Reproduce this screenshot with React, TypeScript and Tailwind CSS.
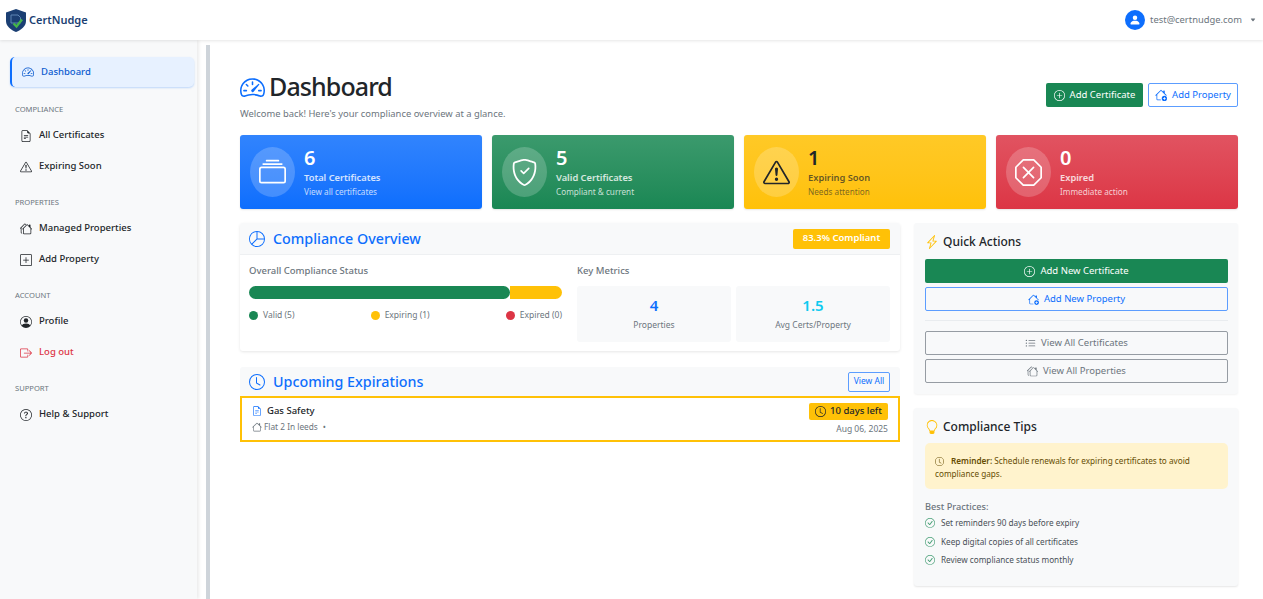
import type { ReactNode } from 'react';
import {
  BsBoxArrowRight,
  BsCaretDownFill,
  BsCheckCircle,
  BsClock,
  BsCollection,
  BsExclamationTriangle,
  BsFileEarmarkText,
  BsHouse,
  BsHouseAdd,
  BsHouses,
  BsLightbulb,
  BsLightningCharge,
  BsListUl,
  BsPersonCircle,
  BsPersonFill,
  BsPieChart,
  BsPlusCircle,
  BsPlusSquare,
  BsQuestionCircle,
  BsShieldCheck,
  BsSpeedometer2,
  BsXOctagon,
} from 'react-icons/bs';

function Logo() {
  return (
    <svg width="20" height="23" viewBox="0 0 20 23">
      <path d="M10 0 L20 3.5 V12 C20 17.5 15 21 10 23 C5 21 0 17.5 0 12 V3.5 Z" fill="#1b3f73" />
      <path d="M5 6 H12 L14.5 8.5 V14 H5 Z" fill="none" stroke="#5f86b5" strokeWidth="1" />
      <path d="M7.5 14.5 L10.5 17.5 L16 10.5" fill="none" stroke="#45b649" strokeWidth="2.4" />
    </svg>
  );
}

function SideLabel({ children, className }: { children: ReactNode; className: string }) {
  return <div className={`pl-[15px] text-[7.6px] uppercase leading-[12px] text-[#6c757d] ${className}`}>{children}</div>;
}

function SideLink({ icon, label, className = 'text-[#212529]' }: { icon: ReactNode; label: string; className?: string }) {
  return (
    <div className={`flex h-[31px] items-center gap-[7px] pl-[20px] text-[9.5px] font-medium ${className}`}>
      <span className="flex w-[12px] justify-center text-[12px]">{icon}</span>
      {label}
    </div>
  );
}

function Sidebar() {
  return (
    <aside className="w-[197px] shrink-0 bg-[#f8f9fa] pl-[10px] pt-[17px] shadow-[2px_0_3px_rgba(0,0,0,0.08)]">
      <div className="flex h-[30px] w-[184px] items-center gap-[7px] rounded-[5px] border-l-[2px] border-[#0d6efd] bg-[#e7f1ff] pl-[10px] text-[9.5px] font-medium text-[#0d5ccf] shadow-[0_1px_2px_rgba(13,110,253,0.25)]">
        <BsSpeedometer2 className="text-[12px]" />
        Dashboard
      </div>
      <div className="-ml-[10px]">
        <SideLabel className="mt-[16px]">Compliance</SideLabel>
        <div className="mt-[5px]">
          <SideLink icon={<BsFileEarmarkText />} label="All Certificates" />
          <SideLink icon={<BsExclamationTriangle />} label="Expiring Soon" />
        </div>
        <SideLabel className="mt-[14px]">Properties</SideLabel>
        <div className="mt-[5px]">
          <SideLink icon={<BsHouses />} label="Managed Properties" />
          <SideLink icon={<BsPlusSquare />} label="Add Property" />
        </div>
        <SideLabel className="mt-[14px]">Account</SideLabel>
        <div className="mt-[5px]">
          <SideLink icon={<BsPersonCircle />} label="Profile" />
          <SideLink icon={<BsBoxArrowRight />} label="Log out" className="text-[#dc3545]" />
        </div>
        <SideLabel className="mt-[14px]">Support</SideLabel>
        <div className="mt-[5px]">
          <SideLink icon={<BsQuestionCircle />} label="Help & Support" />
        </div>
      </div>
    </aside>
  );
}

function StatCard(props: {
  icon: ReactNode;
  value: string;
  title: string;
  sub: string;
  className: string;
  circle: string;
  titleColor: string;
  subColor: string;
}) {
  return (
    <div className={`flex h-[74px] items-center gap-[9px] rounded-[3px] pl-[10px] shadow-[0_1px_2px_rgba(0,0,0,0.1)] ${props.className}`}>
      <div className={`flex h-[50px] w-[45px] items-center justify-center rounded-[50%] text-[27px] ${props.circle}`}>{props.icon}</div>
      <div>
        <div className="text-[20px] font-semibold leading-[24px]">{props.value}</div>
        <div className={`mt-[1px] text-[9.3px] font-semibold leading-[14px] ${props.titleColor}`}>{props.title}</div>
        <div className={`text-[8.2px] leading-[13px] ${props.subColor}`}>{props.sub}</div>
      </div>
    </div>
  );
}

function Legend({ color, label }: { color: string; label: string }) {
  return (
    <div className="flex items-center gap-[5px] text-[8.5px] text-[#6c757d]">
      <span className={`h-[9px] w-[9px] rounded-full ${color}`} />
      {label}
    </div>
  );
}

function Metric({ value, label, color }: { value: string; label: string; color: string }) {
  return (
    <div className="flex h-[56px] flex-col items-center justify-center rounded-[3px] bg-[#f8f9fa] pb-[3px]">
      <div className={`text-[15px] font-semibold leading-[20px] ${color}`}>{value}</div>
      <div className="mt-[4px] text-[8.5px] leading-[12px] text-[#6c757d]">{label}</div>
    </div>
  );
}

function WideButton({ icon, label, className }: { icon: ReactNode; label: string; className: string }) {
  return (
    <div className={`flex items-center justify-center gap-[5px] rounded-[2px] text-[9.5px] ${className}`}>
      <span className="text-[11px]">{icon}</span>
      {label}
    </div>
  );
}

function Tip({ children }: { children: string }) {
  return (
    <div className="flex h-[18.5px] items-center gap-[6px] text-[8.2px] text-[#495057]">
      <BsCheckCircle className="text-[10px] text-[#198754]/80" />
      {children}
    </div>
  );
}

export default function App() {
  return (
    <div className="flex h-[599px] flex-col overflow-hidden bg-white font-['Noto_Sans',sans-serif]">
      <header className="z-10 flex h-[40px] shrink-0 items-center justify-between bg-white pl-[6px] pr-[7px] shadow-[0_1px_3px_rgba(0,0,0,0.1)]">
        <div className="flex items-center gap-[3px] text-[11px] font-semibold text-[#1b3f73]">
          <Logo />
          CertNudge
        </div>
        <div className="flex items-center gap-[5px] text-[9.4px] text-[#6c757d]">
          <span className="flex h-[20px] w-[20px] items-center justify-center rounded-full bg-[#0d6efd] text-[12px] text-white">
            <BsPersonFill />
          </span>
          test@certnudge.com
          <BsCaretDownFill className="ml-[3px] text-[6px]" />
        </div>
      </header>

      <div className="flex flex-1">
        <Sidebar />
        <div className="ml-[9px] mt-[5px] w-[4px] shrink-0 bg-[#ced4da]" />
        <main className="ml-[30px] w-[998px] pt-[31px]">
          <div className="flex justify-between">
            <div>
              <h1 className="flex h-[32px] items-center gap-[4px] text-[25px] font-medium tracking-[-0.9px] text-[#212529]">
                <BsSpeedometer2 className="text-[25px] text-[#0d6efd]" />
                Dashboard
              </h1>
              <p className="mt-[4px] text-[9.4px] leading-[14px] text-[#6c757d]">Welcome back! Here's your compliance overview at a glance.</p>
            </div>
            <div className="mt-[12px] flex h-[24px] gap-[5px] text-[9.5px]">
              <div className="flex w-[97px] items-center justify-center gap-[5px] rounded-[2px] bg-[#198754] text-white">
                <BsPlusCircle className="text-[11px]" />
                Add Certificate
              </div>
              <div className="flex w-[90px] items-center justify-center gap-[5px] rounded-[2px] border border-[#5c9dff] text-[#0d6efd]">
                <BsHouseAdd className="text-[12px]" />
                Add Property
              </div>
            </div>
          </div>

          <div className="mt-[14px] grid grid-cols-4 gap-[10px]">
            <StatCard
              icon={<BsCollection />}
              value="6"
              title="Total Certificates"
              sub="View all certificates"
              className="bg-gradient-to-b from-[#3184fd] to-[#0d6efd] text-white"
              circle="bg-white/20"
              titleColor="text-white/80"
              subColor="text-white/75"
            />
            <StatCard
              icon={<BsShieldCheck />}
              value="5"
              title="Valid Certificates"
              sub="Compliant & current"
              className="bg-gradient-to-b from-[#3b9a6d] to-[#198754] text-white"
              circle="bg-white/20"
              titleColor="text-white/80"
              subColor="text-white/75"
            />
            <StatCard
              icon={<BsExclamationTriangle />}
              value="1"
              title="Expiring Soon"
              sub="Needs attention"
              className="bg-gradient-to-b from-[#ffc926] to-[#ffc107] text-[#212529]"
              circle="bg-white/20"
              titleColor="text-[#212529]/70"
              subColor="text-[#212529]/60"
            />
            <StatCard
              icon={<BsXOctagon />}
              value="0"
              title="Expired"
              sub="Immediate action"
              className="bg-gradient-to-b from-[#e15361] to-[#dc3545] text-white"
              circle="bg-white/20"
              titleColor="text-white/80"
              subColor="text-white/75"
            />
          </div>

          <div className="mt-[14px] flex justify-between">
            <div className="w-[660px]">
              <section className="h-[128px] rounded-[3px] bg-white shadow-[0_1px_3px_rgba(0,0,0,0.1)]">
                <div className="flex h-[32px] items-center justify-between rounded-t-[3px] border-b border-[#eef0f2] bg-[#f8f9fa] pl-[9px] pr-[10px]">
                  <h2 className="flex items-center gap-[8px] pt-[1px] text-[14.3px] font-medium text-[#0d6efd]">
                    <BsPieChart className="text-[16px]" />
                    Compliance Overview
                  </h2>
                  <span className="flex h-[20px] w-[97px] items-center justify-center rounded-[2px] bg-[#ffc107] text-[9.5px] font-semibold text-white">83.3% Compliant</span>
                </div>
                <div className="flex gap-[15px] pl-[9px] pr-[10px] pt-[9px]">
                  <div className="w-[313px]">
                    <div className="text-[9.5px] font-medium leading-[14px] text-[#6c757d]">Overall Compliance Status</div>
                    <div className="mt-[8px] flex h-[13px] overflow-hidden rounded-full">
                      <div className="w-[261px] rounded-r-full bg-[#198754]" />
                      <div className="flex-1 bg-[#ffc107]" />
                    </div>
                    <div className="mt-[10px] flex justify-between">
                      <Legend color="bg-[#198754]" label="Valid (5)" />
                      <Legend color="bg-[#ffc107]" label="Expiring (1)" />
                      <Legend color="bg-[#dc3545]" label="Expired (0)" />
                    </div>
                  </div>
                  <div className="flex-1">
                    <div className="text-[9.5px] font-medium leading-[14px] text-[#6c757d]">Key Metrics</div>
                    <div className="mt-[8px] grid grid-cols-2 gap-[5px]">
                      <Metric value="4" label="Properties" color="text-[#0d6efd]" />
                      <Metric value="1.5" label="Avg Certs/Property" color="text-[#0dcaf0]" />
                    </div>
                  </div>
                </div>
              </section>

              <section className="mt-[16px]">
                <div className="flex h-[29px] items-center justify-between rounded-t-[3px] bg-[#f8f9fa] pl-[9px] pr-[10px]">
                  <h2 className="flex items-center gap-[8px] pt-[1px] text-[14.3px] font-medium text-[#0d6efd]">
                    <BsClock className="text-[16px]" />
                    Upcoming Expirations
                  </h2>
                  <span className="flex h-[20px] w-[42px] items-center justify-center rounded-[2px] border border-[#5c9dff] text-[8.5px] text-[#0d6efd]">View All</span>
                </div>
                <div className="flex h-[46px] items-start justify-between border-2 border-[#ffc107] pl-[10px] pr-[10px] pt-[5px]">
                  <div className="pt-[1px]">
                    <div className="flex items-center gap-[5px] text-[9.5px] font-medium leading-[14px] text-[#212529]">
                      <BsFileEarmarkText className="text-[10px] text-[#0d6efd]" />
                      Gas Safety
                    </div>
                    <div className="mt-[3px] flex items-center gap-[2px] text-[8.3px] leading-[12px] text-[#6c757d]">
                      <BsHouse className="text-[10px]" />
                      Flat 2 In leeds
                      <span className="ml-[3px]">•</span>
                    </div>
                  </div>
                  <div className="flex flex-col items-end">
                    <span className="flex h-[17px] w-[79px] items-center justify-center gap-[4px] rounded-[2px] bg-[#ffc107] text-[9.5px] font-medium text-[#212529]">
                      <BsClock className="text-[11px]" />
                      10 days left
                    </span>
                    <span className="mt-[3px] text-[8.5px] leading-[12px] text-[#6c757d]">Aug 06, 2025</span>
                  </div>
                </div>
              </section>
            </div>

            <div className="w-[324px]">
              <section className="h-[171px] rounded-[3px] bg-[#f8f9fa] pl-[11px] pr-[10px] pt-[10px] shadow-[0_1px_2px_rgba(0,0,0,0.05)]">
                <h3 className="flex h-[18px] items-center gap-[4px] text-[12px] font-medium text-[#212529]">
                  <BsLightningCharge className="text-[14px] text-[#ffc107]" />
                  Quick Actions
                </h3>
                <div className="mt-[8px] flex flex-col">
                  <WideButton icon={<BsPlusCircle />} label="Add New Certificate" className="h-[24px] bg-[#198754] text-white" />
                  <WideButton icon={<BsHouseAdd />} label="Add New Property" className="mt-[4px] h-[24px] border border-[#5c9dff] pt-[1px] text-[#0d6efd]" />
                  <div className="mt-[9px] h-px bg-[#e9ecef]" />
                  <WideButton icon={<BsListUl />} label="View All Certificates" className="mt-[10px] h-[24px] border border-[#6c757d]/70 pt-[1px] text-[#6c757d]" />
                  <WideButton icon={<BsHouses />} label="View All Properties" className="mt-[4px] h-[24px] border border-[#6c757d]/70 pt-[1px] text-[#6c757d]" />
                </div>
              </section>

              <section className="mt-[14px] h-[178px] rounded-[3px] bg-[#f8f9fa] pl-[11px] pr-[10px] pt-[10px] shadow-[0_1px_2px_rgba(0,0,0,0.1)]">
                <h3 className="flex h-[18px] items-center gap-[4px] text-[12px] font-medium text-[#212529]">
                  <BsLightbulb className="text-[14px] text-[#ffc107]" />
                  Compliance Tips
                </h3>
                <div className="mt-[7px] h-[46px] rounded-[5px] bg-[#fff3cd] px-[10px] pt-[11px] text-[8.2px] leading-[13px] text-[#664d03]">
                  <BsClock className="mr-[7px] inline text-[9px]" />
                  <strong className="font-semibold">Reminder:</strong> Schedule renewals for expiring certificates to avoid compliance gaps.
                </div>
                <div className="mt-[11px] text-[9.2px] font-medium leading-[13px] text-[#6c757d]">Best Practices:</div>
                <div className="mt-[1px]">
                  <Tip>Set reminders 90 days before expiry</Tip>
                  <Tip>Keep digital copies of all certificates</Tip>
                  <Tip>Review compliance status monthly</Tip>
                </div>
              </section>
            </div>
          </div>
        </main>
      </div>
    </div>
  );
}
